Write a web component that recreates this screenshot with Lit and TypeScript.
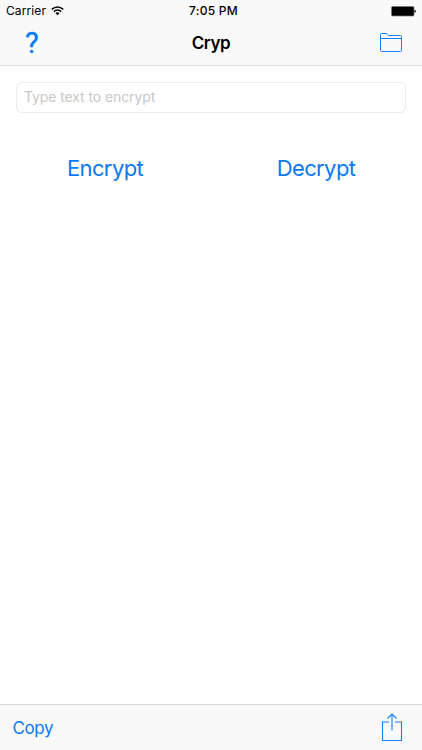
import { LitElement, html, css } from "lit";
import { customElement } from "lit/decorators.js";

@customElement("app-root")
export class AppRoot extends LitElement {
  static styles = css`
    :host {
      display: flex;
      flex-direction: column;
      width: 100%;
      height: 100vh;
      background: #fff;
      font-family: Inter, "Liberation Sans", sans-serif;
      color: #000;
      overflow: hidden;
    }
    * { box-sizing: border-box; }
    svg { display: block; fill: none; }
    header { background: #f9f9f9; border-bottom: 1px solid #d8d8d8; height: 66px; flex: none; }
    .status {
      display: grid;
      grid-template-columns: 1fr auto 1fr;
      align-items: center;
      height: 22px;
      padding: 0 6px;
      font-size: 12px;
      line-height: 22px;
    }
    .carrier { display: flex; align-items: center; gap: 5px; letter-spacing: 0.1px; }
    .time { font-weight: 500; letter-spacing: 0.25px; padding-left: 5px; }
    .battery { justify-self: end; }
    .nav {
      display: grid;
      grid-template-columns: 1fr auto 1fr;
      align-items: center;
      height: 42px;
      padding: 0 20px;
    }
    h1 { margin: 0; font-size: 17px; font-weight: 600; line-height: 24px; letter-spacing: -0.4px; }
    button {
      border: 0;
      padding: 0;
      margin: 0;
      background: none;
      font: inherit;
      color: #087af8;
    }
    .help { justify-self: start; padding: 0 0 1px 5px; font: 400 29px/36px Roboto, sans-serif; -webkit-text-stroke: 0.3px #087af8; }
    .folder { justify-self: end; padding-bottom: 1px; }
    main { flex: 1; padding: 16px 16px 0; }
    input {
      display: block;
      width: 390px;
      height: 31px;
      border: 1px solid #ebebeb;
      border-radius: 6px;
      padding: 0 7px 2px;
      font: 14px/20px Inter, sans-serif;
      letter-spacing: -0.1px;
      background: #fff;
      outline: none;
    }
    input::placeholder { color: #c7c7cc; opacity: 1; }
    .actions { display: grid; grid-template-columns: 178px 178px; justify-content: space-between; margin-top: 40px; padding-right: 1px; }
    .actions button { font-size: 22px; line-height: 30px; letter-spacing: -0.6px; }
    footer {
      display: flex;
      align-items: center;
      justify-content: space-between;
      height: 46px;
      flex: none;
      padding: 0 19px 0 12.5px;
      background: #f9f9f9;
      border-top: 1px solid #d8d8d8;
    }
    .copy { font-size: 17px; line-height: 24px; letter-spacing: -0.4px; }
  `;

  render() {
    return html`
      <header>
        <div class="status">
          <div class="carrier">
            <span>Carrier</span>
            <svg width="13" height="10" viewBox="0 0 13 10" stroke="#000" stroke-width="1.5">
              <path d="M.7 3.4Q6.5-1.5 12.3 3.4M2.8 5.6Q6.5 2.5 10.2 5.6" />
              <path d="M4.4 7.1Q6.5 5.4 8.6 7.1L6.5 9.3Z" fill="#000" stroke="none" />
            </svg>
          </div>
          <span class="time">7:05 PM</span>
          <svg class="battery" width="25" height="11" viewBox="0 0 25 11">
            <rect x=".5" y=".5" width="22.5" height="9.5" rx="1.2" fill="#000" stroke="#777" stroke-width=".7" />
            <path d="M23.5 3.5Q25 4 25 5.3T23.5 7Z" fill="#222" />
          </svg>
        </div>
        <div class="nav">
          <button class="help">?</button>
          <h1>Cryp</h1>
          <button class="folder" aria-label="Files">
            <svg width="24" height="20" viewBox="0 0 24 20" stroke="#157efb" stroke-width="1">
              <path d="M3.5 18.5Q2.5 18.5 2.5 17.5V1.5Q2.5 .5 3.5 .5H8.5Q9.2 .5 9.5 1.5T10.8 2.5H22.5Q23.5 2.5 23.5 3.5V17.5Q23.5 18.5 22.5 18.5ZM2.5 5.5H23.5" />
            </svg>
          </button>
        </div>
      </header>
      <main>
        <input placeholder="Type text to encrypt" />
        <div class="actions">
          <button>Encrypt</button>
          <button>Decrypt</button>
        </div>
      </main>
      <footer>
        <button class="copy">Copy</button>
        <button aria-label="Share">
          <svg width="22" height="30" viewBox="0 0 22 30" stroke="#157efb" stroke-width="1.1">
            <path d="M8 9H1.5V27.5H20.5V9H14M11 17.5V1M6.5 5.5L11 1L15.5 5.5" />
          </svg>
        </button>
      </footer>
    `;
  }
}
